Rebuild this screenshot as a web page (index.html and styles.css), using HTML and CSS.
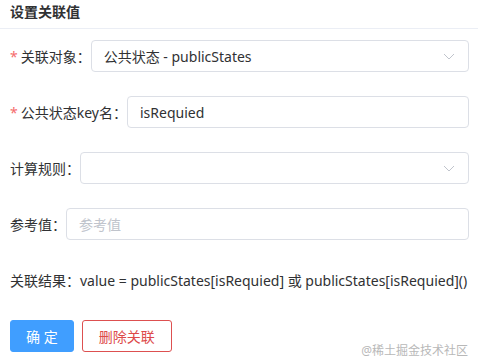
FILE: index.html
```html
<!DOCTYPE html>
<html lang="zh-CN">
<head>
    <meta charset="UTF-8">
    <meta name="viewport" content="width=device-width, initial-scale=1.0">
    <title>设置关联值</title>
    <link rel="stylesheet" href="styles.css">
</head>
<body>
    <!-- Header -->
    <div class="panel-header">设置关联值</div>

    <form class="relate-form">
        <div class="form-row">
            <label class="form-label required">关联对象：</label>
            <div class="select-box">
                <span class="select-value">公共状态 - publicStates</span>
                <svg class="arrow" width="12" height="7" viewBox="0 0 12 7"><path d="M1 1 L6 6 L11 1" fill="none" stroke="#c0c4cc" stroke-width="1"/></svg>
            </div>
        </div>

        <div class="form-row">
            <label class="form-label required">公共状态key名：</label>
            <input class="text-input" type="text" value="isRequied">
        </div>

        <div class="form-row">
            <label class="form-label">计算规则：</label>
            <div class="select-box">
                <span class="select-value"></span>
                <svg class="arrow" width="12" height="7" viewBox="0 0 12 7"><path d="M1 1 L6 6 L11 1" fill="none" stroke="#c0c4cc" stroke-width="1"/></svg>
            </div>
        </div>

        <div class="form-row">
            <label class="form-label">参考值：</label>
            <input class="text-input" type="text" placeholder="参考值">
        </div>

        <div class="form-row result">关联结果：value = publicStates[isRequied] 或 publicStates[isRequied]()</div>

        <div class="actions">
            <button type="button" class="btn btn-primary">确 定</button>
            <button type="button" class="btn btn-danger">删除关联</button>
        </div>
    </form>

    <div class="watermark">@稀土掘金技术社区</div>
</body>
</html>
```

FILE: styles.css
```css
body {
    margin: 0;
    font-family: "Noto Sans", "Noto Sans CJK SC", sans-serif;
    font-size: 14px;
    color: #303133;
    background-color: #fff;
    position: relative;
    height: 364px;
    overflow: hidden;
}
.panel-header {
    height: 28px;
    line-height: 24px;
    padding: 0 10px;
    font-weight: bold;
    color: #303133;
    border-bottom: 1px solid #ebeef5;
}
.relate-form {
    padding: 11px 9px 0 10px;
}
.form-row {
    display: flex;
    align-items: center;
    height: 32px;
    margin-bottom: 24px;
}
.form-label {
    color: #303133;
    white-space: nowrap;
}
.form-label.required::before {
    content: "*";
    color: #f56c6c;
    margin-right: 3px;
}
.select-box, .text-input {
    flex: 1;
    height: 32px;
    box-sizing: border-box;
    border: 1px solid #dcdfe6;
    border-radius: 4px;
    padding: 0 12px;
    font-family: inherit;
    font-size: 14px;
    color: #303133;
    background: #fff;
    outline: none;
}
.select-box {
    display: flex;
    align-items: center;
    justify-content: space-between;
}
.arrow {
    margin-right: 1px;
}
.text-input::placeholder {
    color: #c0c4cc;
}
.result {
    white-space: nowrap;
}
.actions {
    display: flex;
    gap: 8px;
}
.btn {
    height: 32px;
    padding: 0 16px;
    font-family: inherit;
    font-size: 14px;
    border-radius: 3px;
    cursor: pointer;
}
.btn-primary {
    padding: 0 15px;
    background-color: #409eff;
    border: 1px solid #409eff;
    color: #fff;
}
.btn-danger {
    background-color: #fff;
    border: 1px solid #dd5050;
    color: #dd4a4a;
}
.watermark {
    position: absolute;
    right: 10px;
    bottom: 5px;
    font-size: 12px;
    color: #b8b8b8;
}
```
